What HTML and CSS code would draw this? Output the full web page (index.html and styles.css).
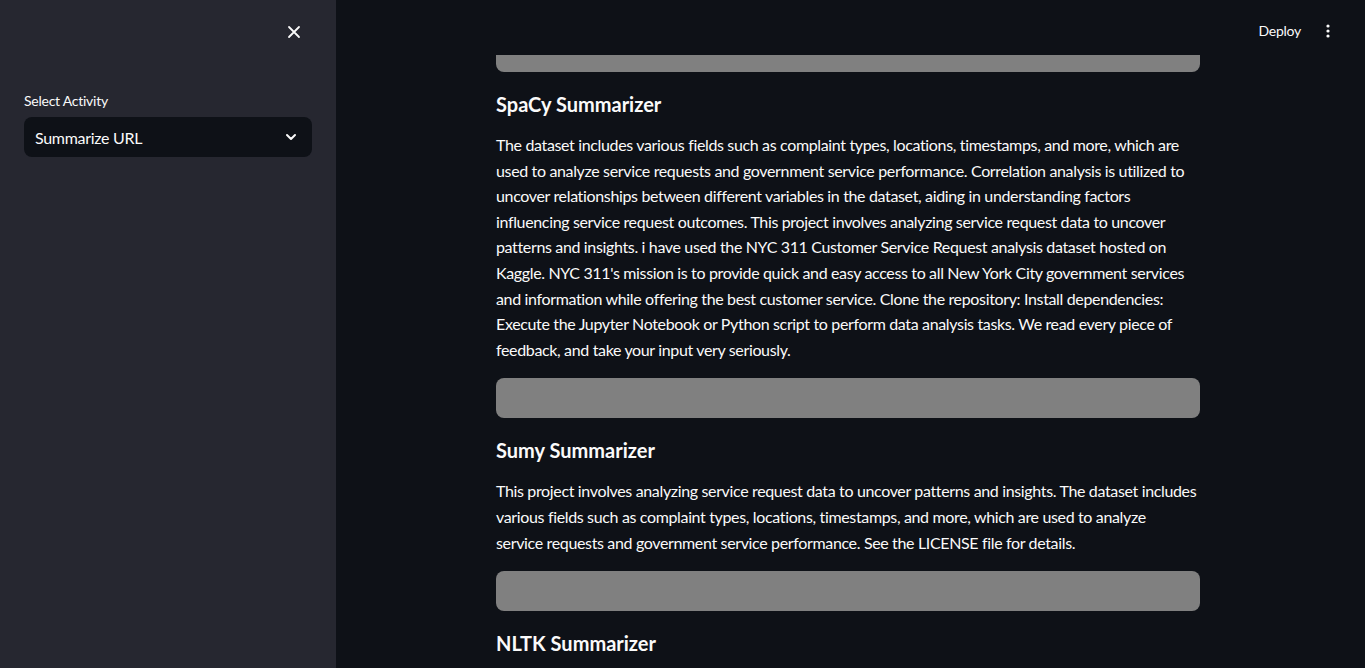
FILE: index.html
```html
<!DOCTYPE html>
<html lang="en">
<head>
<meta charset="utf-8">
<title>Summarizer</title>
<link rel="stylesheet" href="styles.css">
</head>
<body>
<div class="app">
  <aside class="sidebar">
    <div class="sidebar-top">
      <button class="close-btn" aria-label="Close sidebar">
        <svg width="14" height="14" viewBox="0 0 14 14"><path d="M2 2 L12 12 M12 2 L2 12" stroke="#fafafa" stroke-width="1.8" stroke-linecap="round"/></svg>
      </button>
    </div>
    <label class="field-label">Select Activity</label>
    <div class="select">
      <span>Summarize URL</span>
      <svg width="12" height="8" viewBox="0 0 12 8"><path d="M2 2 L6 6 L10 2" fill="none" stroke="#fafafa" stroke-width="2" stroke-linecap="round" stroke-linejoin="round"/></svg>
    </div>
  </aside>
  <main class="main">
    <header class="header">
      <span class="deploy">Deploy</span>
      <span class="menu">
        <svg width="4" height="14" viewBox="0 0 4 14"><circle cx="2" cy="2" r="1.6" fill="#fafafa"/><circle cx="2" cy="7" r="1.6" fill="#fafafa"/><circle cx="2" cy="12" r="1.6" fill="#fafafa"/></svg>
      </span>
    </header>
    <section class="content">
      <div class="bar bar-cut"></div>
      <h3 class="title">SpaCy Summarizer</h3>
      <p class="text">The dataset includes various fields such as complaint types, locations, timestamps, and more, which are used to analyze service requests and government service performance. Correlation analysis is utilized to uncover relationships between different variables in the dataset, aiding in understanding factors influencing service request outcomes. This project involves analyzing service request data to uncover patterns and insights. i have used the NYC 311 Customer Service Request analysis dataset hosted on Kaggle. NYC 311's mission is to provide quick and easy access to all New York City government services and information while offering the best customer service. Clone the repository: Install dependencies: Execute the Jupyter Notebook or Python script to perform data analysis tasks. We read every piece of feedback, and take your input very seriously.</p>
      <div class="bar"></div>
      <h3 class="title">Sumy Summarizer</h3>
      <p class="text">This project involves analyzing service request data to uncover patterns and insights. The dataset includes various fields such as complaint types, locations, timestamps, and more, which are used to analyze<br>service requests and government service performance. See the LICENSE file for details.</p>
      <div class="bar"></div>
      <h3 class="title">NLTK Summarizer</h3>
    </section>
  </main>
</div>
</body>
</html>
```
FILE: styles.css
```css
* { box-sizing: border-box; }
html, body { margin: 0; padding: 0; height: 100%; }
body {
  background: #0e1117;
  color: #fafafa;
  font-family: "Lato", "Open Sans", sans-serif;
  overflow: hidden;
}
.app {
  display: flex;
  height: 668px;
}
.sidebar {
  width: 336px;
  flex: none;
  background: #262730;
  padding: 0 24px;
  display: flex;
  flex-direction: column;
}
.sidebar-top {
  height: 91px;
  flex: none;
  display: flex;
  justify-content: flex-end;
  align-items: flex-start;
  padding-top: 25px;
}
.close-btn {
  background: none;
  border: 0;
  padding: 0;
  width: 14px;
  height: 14px;
  margin-right: 11px;
  display: flex;
}
.field-label {
  font-size: 14px;
  line-height: 20px;
  letter-spacing: -0.25px;
  margin-bottom: 6px;
}
.select {
  height: 40px;
  flex: none;
  background: #0e1117;
  border-radius: 8px;
  display: flex;
  align-items: center;
  justify-content: space-between;
  padding: 0 15px 0 11px;
  font-size: 16px;
  letter-spacing: -0.3px;
}
.main {
  flex: 1;
  display: flex;
  flex-direction: column;
  align-items: center;
  min-height: 0;
}
.header {
  align-self: stretch;
  flex: none;
  height: 55px;
  display: flex;
  justify-content: flex-end;
  align-items: flex-start;
  padding: 21px 35px 0 0;
  gap: 25px;
  font-size: 14px;
  line-height: 20px;
  letter-spacing: -0.25px;
}
.menu { display: flex; height: 20px; align-items: center; }
.content {
  width: 704px;
  flex: none;
  margin-right: 5px;
  display: flex;
  flex-direction: column;
}
.bar {
  height: 40px;
  background: #808080;
  border-radius: 8px;
  flex: none;
}
.bar-cut {
  height: 17px;
  border-radius: 0 0 8px 8px;
}
.title {
  margin: 17px 0 13px;
  font-size: 20px;
  line-height: 30px;
  font-weight: 700;
}
.text {
  margin: 0 0 16px;
  font-size: 16px;
  line-height: 25.6px;
  letter-spacing: -0.35px;
}
```
